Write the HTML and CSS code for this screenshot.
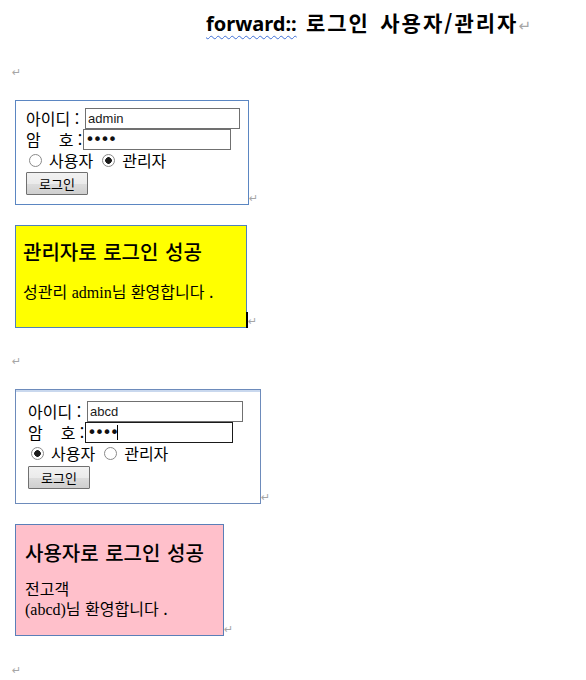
FILE: index.html
```html
<!DOCTYPE html>
<html lang="ko">
<head>
<meta charset="utf-8">
<title>forward:: 로그인 사용자/관리자</title>
<link rel="stylesheet" href="styles.css">
</head>
<body>
<div class="doc">
  <p class="title"><span class="spell">forward::</span> <span class="ko ko-first">로그인</span>&nbsp; <span class="ko">사용자/관리자</span><span class="mark mark-lg">↵</span></p>

  <p class="blank blank-top"><span class="mark">↵</span></p>

  <div class="para para-form">
    <form class="login login-admin">
      <div class="row"><label class="lbl lbl-id">아이디 :</label><input class="field field-id" type="text" value="admin"></div>
      <div class="row"><label class="lbl lbl-pw">암&nbsp;&nbsp;&nbsp;&nbsp;호 :</label><input class="field field-pw" type="password" value="1234"></div>
      <div class="row row-radio">
        <input class="radio" type="radio" name="role1"><span class="rtext">사용자</span>
        <input class="radio" type="radio" name="role1" checked><span class="rtext">관리자</span>
      </div>
      <div class="row-btn"><button class="btn" type="button">로그인</button></div>
    </form>
    <span class="mark">↵</span>
  </div>

  <div class="para para-result">
    <div class="result result-admin">
      <h3 class="rtitle">관리자로 로그인 성공</h3>
      <p class="rbody">성관리 <span class="latin">admin</span>님 환영합니다 .</p>
    </div>
    <span class="cursor-bar"></span><span class="mark">↵</span>
  </div>

  <p class="blank blank-mid"><span class="mark">↵</span></p>

  <div class="para para-form">
    <form class="login login-user">
      <div class="row"><label class="lbl lbl-id">아이디 :</label><input class="field field-id" type="text" value="abcd"></div>
      <div class="row"><label class="lbl lbl-pw">암&nbsp;&nbsp;&nbsp;&nbsp;호 :</label><span class="pw-wrap"><input class="field field-pw field-focus" type="password" value="1234"><span class="caret"></span></span></div>
      <div class="row row-radio">
        <input class="radio" type="radio" name="role2" checked><span class="rtext">사용자</span>
        <input class="radio" type="radio" name="role2"><span class="rtext">관리자</span>
      </div>
      <div class="row-btn"><button class="btn" type="button">로그인</button></div>
    </form>
    <span class="mark">↵</span>
  </div>

  <div class="para para-result">
    <div class="result result-user">
      <h3 class="rtitle">사용자로 로그인 성공</h3>
      <p class="rbody">전고객<br><span class="latin">(abcd)</span>님 환영합니다 .</p>
    </div>
    <span class="mark">↵</span>
  </div>

  <p class="blank blank-bottom"><span class="mark">↵</span></p>
</div>
</body>
</html>
```

FILE: styles.css
```css
* { box-sizing: border-box; }

html, body {
  margin: 0;
  padding: 0;
  background: #ffffff;
}

body {
  width: 586px;
  height: 680px;
  overflow: hidden;
  font-family: "Noto Sans CJK KR", "Noto Sans", sans-serif;
  color: #000;
}

.doc {
  padding-left: 15px;
}

/* ---------- title ---------- */
.title {
  height: 34px;
  margin: 0 0 0 191px;
  padding-top: 10px;
  font: 700 20px/24px "Noto Sans", "Noto Sans CJK KR", sans-serif;
  white-space: nowrap;
}

.title .ko {
  font-family: "Noto Sans CJK KR", "Noto Sans", sans-serif;
  font-size: 21px;
  line-height: 24px;
  letter-spacing: 2px;
}

.title .ko-first {
  margin-left: 4px;
}

.spell {
  text-decoration: underline wavy #3f6fd6;
  text-decoration-thickness: 1px;
  text-underline-offset: 4px;
  text-decoration-skip-ink: none;
}

/* ---------- paragraph marks ---------- */
.mark {
  font: 400 11px/12px "DejaVu Sans", sans-serif;
  color: #a6a6a6;
}

.mark-lg {
  font-size: 15px;
  font-weight: 400;
  margin-left: 0;
}

.blank {
  margin: 0 0 0 -3px;
  height: 12px;
  line-height: 12px;
}

.blank-top { margin-top: 29px; }
.blank-mid { margin-top: 24px; }
.blank-bottom { margin-top: 25px; }

/* ---------- paragraph with box ---------- */
.para {
  display: flex;
  align-items: flex-end;
}

.para-form { margin-top: 25px; }
.para-result { margin-top: 20px; }

/* ---------- login form box ---------- */
.login {
  margin: 0;
  border: 1px solid #5b86c2;
  font-size: 16px;
  line-height: 21px;
}

.login-admin {
  width: 234px;
  padding: 7px 0 9px 10px;
}

.login-user {
  width: 246px;
  padding: 11px 0 14px 12px;
  border-color: #6d8bbb;
  box-shadow: inset 0 2px 0 #c9d8ee;
}

.row {
  display: flex;
  align-items: center;
  height: 21px;
}

.lbl {
  white-space: nowrap;
  line-height: 19px;
}
.lbl-id { margin-right: 6px; }
.lbl-pw { margin-right: 1px; }

.field {
  height: 21px;
  margin: 0;
  padding: 0 2px;
  border: 1px solid #707070;
  border-radius: 0;
  background: #fff;
  font: 400 13px "Liberation Sans", Arial, sans-serif;
  color: #1a1a1a;
  outline: none;
}

.field-id { width: 155px; }
.field-pw {
  width: 148px;
  padding-left: 1px;
  font-family: "DejaVu Sans", sans-serif;
  font-size: 16px;
  letter-spacing: -2px;
  color: #111;
}
.login-user .field-id { width: 156px; }
.field-focus { border-color: #1a1a1a; }

.pw-wrap {
  position: relative;
  display: inline-flex;
}

.caret {
  position: absolute;
  left: 32px;
  top: 3px;
  width: 1px;
  height: 15px;
  background: #000;
}

.row-radio {
  padding-left: 3px;
}

.radio {
  -webkit-appearance: none;
  appearance: none;
  width: 13px;
  height: 13px;
  margin: 0 7px 0 0;
  border: 1px solid #8a8a8a;
  border-radius: 50%;
  background: #fff;
}

.radio:checked {
  background: radial-gradient(circle, #1c1c1c 0 3px, #ffffff 3.6px);
}

.rtext {
  margin-right: 9px;
  white-space: nowrap;
  line-height: 19px;
}

.row-btn {
  margin-top: 1px;
}

.login-user .row-btn { margin-top: 2px; }

.btn {
  width: 62px;
  height: 23px;
  margin: 0;
  padding: 0;
  border: 1px solid #707070;
  border-radius: 1px;
  background: linear-gradient(#f2f2f2 0%, #ebebeb 50%, #dddddd 51%, #cfcfcf 100%);
  font: 400 13px/21px "Noto Sans CJK KR", sans-serif;
  color: #000;
}

/* ---------- result box ---------- */
.result {
  border: 1px solid #4f81bd;
}

.result-admin {
  width: 232px;
  padding: 14px 7px 24px 7px;
  background: #ffff00;
}

.result-user {
  width: 209px;
  padding: 16px 8px 15px 9px;
  background: #ffc0cb;
  border-color: #5a7fb8;
}

.rtitle {
  margin: 0;
  font-size: 20px;
  line-height: 24px;
  font-weight: 500;
  white-space: nowrap;
  word-spacing: 1px;
}

.rbody {
  margin: 17px 0 0;
  font-size: 16px;
  line-height: 20px;
}

.result-user .rbody { margin-top: 13px; }

.latin {
  font-family: "Liberation Serif", "Times New Roman", serif;
}

.cursor-bar {
  align-self: flex-end;
  width: 2px;
  height: 16px;
  margin-left: -1px;
  background: #000;
}
```
